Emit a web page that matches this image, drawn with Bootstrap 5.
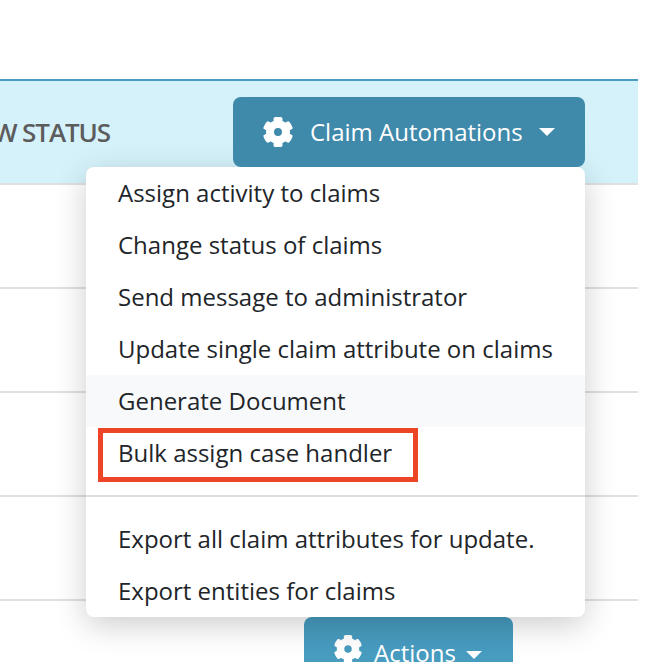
<!DOCTYPE html>
<html lang="en">
<head>
<meta charset="utf-8">
<title>Claim Automations</title>
<link href="https://cdn.jsdelivr.net/npm/bootstrap@5.3.0/dist/css/bootstrap.min.css" rel="stylesheet">
<style>
html,body{height:662px;overflow:hidden;background:#fff}
body{font-family:"Open Sans",sans-serif;color:#212529}
.sheet{width:638px;padding-top:79px}
.head-row{height:106px;background:#d5f2fb;border-top:2px solid #479cc0;border-bottom:2px solid #e0e0e0;padding-right:53px}
.head-label{width:110px;flex:none;display:flex;justify-content:flex-end;white-space:nowrap;font-size:26px;font-weight:600;color:#5c5c5c;letter-spacing:-1.1px;padding-top:1px}
.auto-btn{position:relative;z-index:1001;width:352px;height:70px;background:#3f89ab;border:0;border-radius:8px;color:#fff;font-size:24px;padding:0 0 0 30px;gap:17px;white-space:nowrap}
.auto-btn:hover,.auto-btn:active{background:#3f89ab;color:#fff}
.gear{fill:#fff;stroke:#fff;stroke-width:24;stroke-linejoin:round;flex:none}
.caret-down{width:0;height:0;border-left:8px solid transparent;border-right:8px solid transparent;border-top:8px solid #fff;flex:none}
.auto-btn .caret-down{margin-left:-1px}
.auto-menu{width:499px;right:0;top:100%;padding:0;margin:0;border:0;border-radius:8px;box-shadow:0 8px 32px rgba(0,0,0,.2);font-size:24px;overflow:visible}
.auto-menu .dropdown-item{height:52px;line-height:52px;padding:0 32px;color:#212529;font-size:24px}
.auto-menu .is-hover{background:#f8f9fa}
.auto-menu .dropdown-divider{margin:16px 0 16px;border-top:2px solid #ddd;opacity:1}
.callout{left:12px;top:261px;width:320px;height:54px;border:5px solid #ee4529;pointer-events:none}
.body-row{height:104px;border-bottom:2px solid #e0e0e0}
.last-row{padding:16px 125px 0 0}
.act-btn{width:209px;height:70px;background:#479cc0;border:0;border-radius:8px 8px 0 0;color:#fff;font-size:24px;padding:18px 30px 0;gap:12px;align-items:flex-start}
.act-btn .caret-down{margin-top:16px;margin-left:-2px}
</style>
</head>
<body>
<div class="sheet">
  <div class="head-row d-flex align-items-center justify-content-between">
    <div class="head-label">NEW STATUS</div>
    <div class="dropdown">
      <button type="button" class="btn auto-btn d-flex align-items-center">
        <svg class="gear" width="30" height="30" viewBox="0 0 512 512"><path d="M487.4 315.7l-42.6-24.6c4.3-23.2 4.3-47 0-70.2l42.6-24.6c4.9-2.8 7.1-8.6 5.5-14-11.1-35.6-30-67.8-54.7-94.6-3.8-4.1-10-5.1-14.8-2.3L380.8 110c-17.9-15.4-38.5-27.3-60.8-35.1V25.8c0-5.6-3.9-10.5-9.4-11.7-36.7-8.2-74.3-7.8-109.2 0-5.5 1.2-9.4 6.1-9.4 11.7V75c-22.2 7.9-42.8 19.8-60.8 35.1L88.7 85.5c-4.9-2.8-11-1.9-14.8 2.3-24.7 26.7-43.6 58.9-54.7 94.6-1.7 5.4.6 11.2 5.5 14L67.3 221c-4.3 23.2-4.3 47 0 70.2l-42.6 24.6c-4.9 2.8-7.1 8.6-5.5 14 11.1 35.6 30 67.8 54.7 94.6 3.8 4.1 10 5.1 14.8 2.3l42.6-24.6c17.9 15.4 38.5 27.3 60.8 35.1v49.2c0 5.6 3.9 10.5 9.4 11.7 36.7 8.2 74.3 7.8 109.2 0 5.5-1.2 9.4-6.1 9.4-11.7v-49.2c22.2-7.9 42.8-19.8 60.8-35.1l42.6 24.6c4.9 2.8 11 1.9 14.8-2.3 24.7-26.7 43.6-58.9 54.7-94.6 1.5-5.5-.7-11.3-5.6-14.1zM256 336c-44.1 0-80-35.9-80-80s35.9-80 80-80 80 35.9 80 80-35.9 80-80 80z"/></svg>
        <span>Claim Automations</span>
        <span class="caret-down"></span>
      </button>
      <ul class="dropdown-menu show auto-menu">
        <li><a class="dropdown-item" href="#">Assign activity to claims</a></li>
        <li><a class="dropdown-item" href="#">Change status of claims</a></li>
        <li><a class="dropdown-item" href="#">Send message to administrator</a></li>
        <li><a class="dropdown-item" href="#">Update single claim attribute on claims</a></li>
        <li><a class="dropdown-item is-hover" href="#">Generate Document</a></li>
        <li><a class="dropdown-item" href="#">Bulk assign case handler</a></li>
        <li><hr class="dropdown-divider"></li>
        <li><a class="dropdown-item" href="#">Export all claim attributes for update.</a></li>
        <li><a class="dropdown-item" href="#">Export entities for claims</a></li>
        <li class="callout position-absolute" aria-hidden="true"></li>
      </ul>
    </div>
  </div>
  <div class="body-row"></div>
  <div class="body-row"></div>
  <div class="body-row"></div>
  <div class="body-row"></div>
  <div class="last-row d-flex justify-content-end">
    <button type="button" class="btn act-btn d-flex">
      <svg class="gear" width="28" height="28" viewBox="0 0 512 512"><path d="M487.4 315.7l-42.6-24.6c4.3-23.2 4.3-47 0-70.2l42.6-24.6c4.9-2.8 7.1-8.6 5.5-14-11.1-35.6-30-67.8-54.7-94.6-3.8-4.1-10-5.1-14.8-2.3L380.8 110c-17.9-15.4-38.5-27.3-60.8-35.1V25.8c0-5.6-3.9-10.5-9.4-11.7-36.7-8.2-74.3-7.8-109.2 0-5.5 1.2-9.4 6.1-9.4 11.7V75c-22.2 7.9-42.8 19.8-60.8 35.1L88.7 85.5c-4.9-2.8-11-1.9-14.8 2.3-24.7 26.7-43.6 58.9-54.7 94.6-1.7 5.4.6 11.2 5.5 14L67.3 221c-4.3 23.2-4.3 47 0 70.2l-42.6 24.6c-4.9 2.8-7.1 8.6-5.5 14 11.1 35.6 30 67.8 54.7 94.6 3.8 4.1 10 5.1 14.8 2.3l42.6-24.6c17.9 15.4 38.5 27.3 60.8 35.1v49.2c0 5.6 3.9 10.5 9.4 11.7 36.7 8.2 74.3 7.8 109.2 0 5.5-1.2 9.4-6.1 9.4-11.7v-49.2c22.2-7.9 42.8-19.8 60.8-35.1l42.6 24.6c4.9 2.8 11 1.9 14.8-2.3 24.7-26.7 43.6-58.9 54.7-94.6 1.5-5.5-.7-11.3-5.6-14.1zM256 336c-44.1 0-80-35.9-80-80s35.9-80 80-80 80 35.9 80 80-35.9 80-80 80z"/></svg>
      <span>Actions</span>
      <span class="caret-down"></span>
    </button>
  </div>
</div>
<script src="https://cdn.jsdelivr.net/npm/bootstrap@5.3.0/dist/js/bootstrap.bundle.min.js"></script>
</body>
</html>
